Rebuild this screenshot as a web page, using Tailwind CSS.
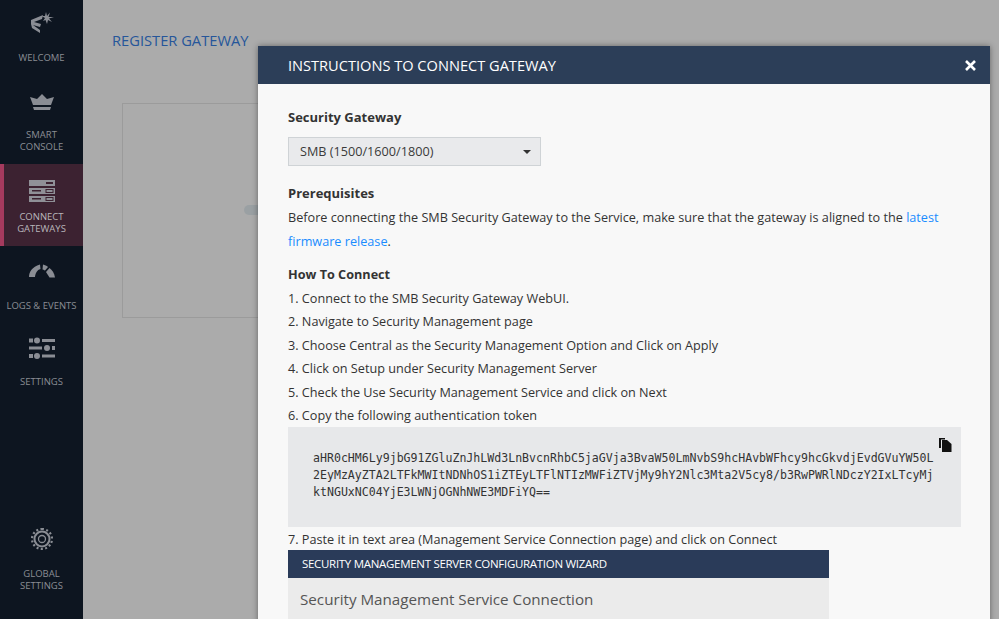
<!DOCTYPE html>
<html>
<head>
<meta charset="utf-8">
<script src="https://cdn.jsdelivr.net/npm/@tailwindcss/browser@4"></script>
</head>
<body class="m-0 overflow-hidden">
<div class="relative flex h-[619px] w-[999px] overflow-hidden bg-[#ababab] font-['Open_Sans',sans-serif]">
  <aside class="flex h-full w-[83px] shrink-0 flex-col bg-[#0d1520] text-center text-[9.5px] leading-[12px] text-[#8a8d94]">
    <div class="flex h-[82px] flex-col items-center pt-[11px]">
      <svg class="h-[24px] w-[24px]" viewBox="0 0 24 24" fill="#8a8d94"><path d="M1 9 L13 4 L12 8 L4 11 L11 13 L10 16 L3 14 L10 19 L10 22 L2 17 L1 13 Z"/><path d="M16 1 L17 5 L20 1.5 L18.5 6 L24 6 L19 7.5 L22 11 L18 9 L17 13 L15.5 9 L13 10 L15 7 L11.5 5 L15 5 Z"/></svg>
      <div class="mt-[17px]">WELCOME</div>
    </div>
    <div class="flex h-[82px] flex-col items-center pt-[11px]">
      <svg class="mt-[1px] h-[18px] w-[26px]" viewBox="0 0 26 18" fill="#8a8d94"><path d="M13 0 L18 5 L25 3 L22 11 L4 11 L1 3 L8 5 Z"/><path d="M4 13 H22 L21 16 H5 Z"/></svg>
      <div class="mt-[17px]">SMART<br>CONSOLE</div>
    </div>
    <div class="flex h-[82px] flex-col items-center border-l-4 border-[#a53a5e] bg-[#3c2231] pt-[16px] pr-[4px] text-[#b9b6bb]">
      <svg class="h-[22px] w-[26px]" viewBox="0 0 26 22"><rect width="26" height="6" y="0" fill="#8f9097"/><rect width="26" height="6" y="8" fill="#8f9097"/><rect width="26" height="6" y="16" fill="#8f9097"/><rect x="17" y="2" width="7" height="2" fill="#3c2231"/><rect x="3" y="10" width="9" height="1.5" fill="#3c2231"/><rect x="17" y="9.5" width="7" height="3" fill="none" stroke="#3c2231" stroke-width="1"/><rect x="3" y="18" width="9" height="1.5" fill="#3c2231"/><rect x="17" y="17.5" width="7" height="3" fill="none" stroke="#3c2231" stroke-width="1"/></svg>
      <div class="mt-[9px]">CONNECT<br>GATEWAYS</div>
    </div>
    <div class="flex h-[82px] flex-col items-center pt-[18px]">
      <svg class="h-[14px] w-[26px]" viewBox="0 0 26 14" fill="#8a8d94"><path d="M0 13 C0 8 3 3 11 0.5 L11.5 5 C8 6 6.5 9 6 13 Z"/><path d="M14 0.5 C16 1 17.500 1.500 19 3 L16 6.500 C15 6 14 5.500 13.500 5.500 Z"/><path d="M20.500 4 C23 6 25.500 9 26 13.500 L20.500 13.500 L17 8 Z"/></svg>
      <div class="mt-[22px] whitespace-nowrap">LOGS &amp; EVENTS</div>
    </div>
    <div class="flex h-[82px] flex-col items-center pt-[9px]">
      <svg class="h-[22px] w-[26px]" viewBox="0 0 26 22" fill="#8a8d94"><rect x="0" y="1.500" width="4" height="4"/><circle cx="8" cy="3.500" r="3"/><rect x="13" y="2" width="13" height="3"/><rect x="0" y="9.500" width="13" height="3"/><circle cx="18" cy="11" r="3"/><rect x="23" y="9" width="3" height="4"/><rect x="0" y="17" width="4" height="4"/><circle cx="8" cy="19" r="3"/><rect x="13" y="17.500" width="13" height="3"/></svg>
      <div class="mt-[17px]">SETTINGS</div>
    </div>
    <div class="mt-auto flex h-[91px] flex-col items-center">
      <svg class="h-[22px] w-[22px]" viewBox="0 0 22 22" fill="none" stroke="#8a8d94"><circle cx="11" cy="11" r="7.500" stroke-width="2"/><circle cx="11" cy="11" r="3.500" stroke-width="1.300"/><path stroke-width="2.200" stroke-dasharray="2 2.320" d="M11 1 A10 10 0 1 1 10.990 1"/></svg>
      <div class="mt-[18px]">GLOBAL<br>SETTINGS</div>
    </div>
  </aside>

  <main class="relative flex-1 px-[29px] pt-[31px]">
    <h1 class="text-[14.700px] leading-[18px] text-[#26569a]">REGISTER GATEWAY</h1>
    <div class="mt-[54px] ml-[10px] h-[215px] w-[500px] border border-[#9b9b9b]"></div>
    <div class="absolute left-[161px] top-[205px] h-[10px] w-[20px] rounded-full bg-[#9aa0a3]"></div>
  </main>

  <section class="absolute left-[258px] top-[46px] h-[590px] w-[732px] bg-[#f8f8f8] shadow-[0_0_6px_rgba(0,0,0,0.4)]">
    <header class="flex h-[38px] items-center justify-between bg-[#2c3e58] pt-[1px] pl-[30px] pr-[14px] text-white">
      <h2 class="text-[14.600px] font-medium leading-none">INSTRUCTIONS TO CONNECT GATEWAY</h2>
      <svg class="h-[11px] w-[11px]" viewBox="0 0 11 11" stroke="#fff" stroke-width="2.600"><path d="M1 1 L10 10 M10 1 L1 10"/></svg>
    </header>
    <div class="px-[30px] pt-[24px] text-[12.670px] leading-[23.500px] text-[#333]">
      <h3 class="text-[13px] font-bold leading-[18px]">Security Gateway</h3>
      <div class="mt-[11px] flex h-[29px] w-[253px] items-center justify-between border border-[#cfd3d6] bg-[#e9eaec] pl-[11px] pr-[9px] text-[#3a3a3a]">
        <span>SMB (1500/1600/1800)</span>
        <span class="h-0 w-0 border-x-[4px] border-t-[4px] border-x-transparent border-t-[#333]"></span>
      </div>
      <h3 class="mt-[18px] text-[13px] font-bold leading-[18px]">Prerequisites</h3>
      <p class="mt-[4px]">Before connecting the SMB Security Gateway to the Service, make sure that the gateway is aligned to the <span class="text-[#1a8cff]">latest</span> <span class="text-[#1a8cff]">firmware release</span>.</p>
      <h3 class="mt-[10px] font-bold">How To Connect</h3>
      <ol>
        <li>1. Connect to the SMB Security Gateway WebUI.</li>
        <li>2. Navigate to Security Management page</li>
        <li>3. Choose Central as the Security Management Option and Click on Apply</li>
        <li>4. Click on Setup under Security Management Server</li>
        <li>5. Check the Use Security Management Service and click on Next</li>
        <li>6. Copy the following authentication token</li>
      </ol>
      <div class="relative mt-[-1px] h-[100px] w-[673px] bg-[#e7e8ea] pl-[25px] pt-[23px] font-['DejaVu_Sans_Mono',monospace] text-[11.590px] leading-[17px] text-[#333]">
        <div class="whitespace-nowrap">aHR0cHM6Ly9jbG91ZGluZnJhLWd3LnBvcnRhbC5jaGVja3BvaW50LmNvbS9hcHAvbWFhcy9hcGkvdjEvdGVuYW50L<br>2EyMzAyZTA2LTFkMWItNDNhOS1iZTEyLTFlNTIzMWFiZTVjMy9hY2Nlc3Mta2V5cy8/b3RwPWRlNDczY2IxLTcyMj<br>ktNGUxNC04YjE3LWNjOGNhNWE3MDFiYQ==</div>
        <svg class="absolute right-[9px] top-[11px] h-[14px] w-[13px]" viewBox="0 0 13 14" fill="#111"><path d="M0 0 H6 V1.500 H2 V10 H0 Z"/><path d="M3 2 H8 L12.500 6 V14 H3 Z"/></svg>
      </div>
      <p class="pt-[1px] mb-[-1px]">7. Paste it in text area (Management Service Connection page) and click on Connect</p>
      <div class="w-[541px]">
        <div class="flex h-[28px] items-center bg-[#2a3b59] pl-[14px] text-[11.500px] tracking-[-0.3px] text-white">SECURITY MANAGEMENT SERVER CONFIGURATION WIZARD</div>
        <div class="h-[70px] bg-[#ebebeb] pl-[12px] pt-[9px] text-[15.200px] leading-[24px] text-[#555]">Security Management Service Connection</div>
      </div>
    </div>
  </section>
</div>
</body>
</html>
